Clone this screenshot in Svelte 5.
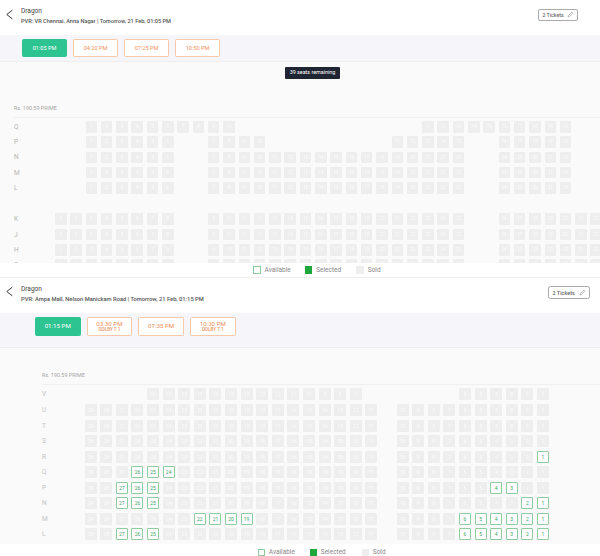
<script>
	const wide = [[0, 29, 19], [20, 10, 10]];

	function makeRows(labels, segs, picked = {}) {
		return labels.map((label) => ({ label, segs, picked: picked[label] || [] }));
	}

	function seatsOf(row, dir) {
		const out = [];
		for (const [col, start, count] of row.segs) {
			for (let i = 0; i < count; i++) {
				const num = start + i * dir;
				out.push({ col: col + i + 1, num, open: row.picked.includes(num) });
			}
		}
		return out;
	}

	const panels = [
		{
			id: 'first',
			place: 'PVR: VR Chennai, Anna Nagar | Tomorrow, 21 Feb, 01:05 PM',
			times: [['01:05 PM'], ['04:20 PM'], ['07:25 PM'], ['10:50 PM']],
			remaining: '39 seats remaining',
			dir: 1,
			rows: [
				...makeRows(['Q'], [[2, 1, 10], [24, 11, 10]]),
				...makeRows(['P'], [[2, 1, 6], [10, 7, 4], [22, 11, 5], [29, 16, 5]]),
				...makeRows(['N', 'M', 'L'], [[2, 1, 6], [10, 7, 17], [29, 24, 5]])
			],
			rowsBelow: makeRows(['K', 'J', 'H', 'G'], [[0, 1, 8], [10, 9, 17], [29, 26, 7]])
		},
		{
			id: 'second',
			place: 'PVR: Ampa Mall, Nelson Manickam Road | Tomorrow, 21 Feb, 01:15 PM',
			times: [['01:15 PM'], ['03:30 PM', 'DOLBY 7.1'], ['07:35 PM'], ['10:30 PM', 'DOLBY 7.1']],
			dir: -1,
			rows: [
				...makeRows(['V'], [[4, 20, 14], [24, 6, 6]]),
				...makeRows(['U', 'T', 'S', 'R', 'Q', 'P', 'N', 'M', 'L'], wide, {
					R: [1],
					Q: [26, 25, 24],
					P: [27, 26, 25, 4, 3],
					N: [27, 26, 25, 2, 1],
					M: [22, 21, 20, 19, 6, 5, 4, 3, 2, 1],
					L: [27, 26, 25, 6, 5, 4, 3, 2, 1]
				})
			],
			rowsBelow: []
		}
	];
</script>

{#snippet seatRow(row, dir)}
	<div class="row">
		<span class="row-label">{row.label}</span>
		<div class="seats">
			{#each seatsOf(row, dir) as seat}
				<span class="seat" class:open={seat.open} style="grid-column: {seat.col}">{seat.num}</span>
			{/each}
		</div>
	</div>
{/snippet}

<main>
	{#each panels as panel}
		<section class="panel {panel.id}">
			<header>
				<svg class="back" viewBox="0 0 8 12" aria-hidden="true">
					<polyline points="7.2,1 0.9,6 7.2,11" fill="none" stroke="#333" stroke-width="1.1" />
				</svg>
				<div class="titles">
					<h1>Dragon</h1>
					<p>{panel.place}</p>
				</div>
				<button class="tickets">
					2 Tickets
					<svg viewBox="0 0 10 10" aria-hidden="true">
						<path d="M1.5 8.5 L2 6.6 L7 1.6 L8.4 3 L3.4 8 Z" fill="none" stroke="#888" stroke-width="0.8" />
					</svg>
				</button>
			</header>

			<nav class="shows">
				{#each panel.times as time, i}
					<button class="show" class:active={i === 0}>
						{time[0]}
						{#if time[1]}<small>{time[1]}</small>{/if}
					</button>
				{/each}
			</nav>

			<div class="map">
				{#if panel.remaining}
					<div class="remaining">{panel.remaining}</div>
				{/if}
				<div class="price">Rs. 190.59 PRIME</div>
				{#each panel.rows as row}
					{@render seatRow(row, panel.dir)}
				{/each}
				{#if panel.rowsBelow.length}
					<div class="aisle"></div>
					{#each panel.rowsBelow as row}
						{@render seatRow(row, panel.dir)}
					{/each}
				{/if}
			</div>

			<footer>
				<span class="key"><i class="swatch available"></i>Available</span>
				<span class="key"><i class="swatch selected"></i>Selected</span>
				<span class="key"><i class="swatch sold"></i>Sold</span>
			</footer>
		</section>
	{/each}
</main>

<style>
	:global(body) {
		margin: 0;
		background: #fff;
	}

	main {
		width: 600px;
		height: 556px;
		overflow: hidden;
		font-family: Roboto, "Liberation Sans", sans-serif;
		color: #555;
	}

	.panel {
		--seat: 11.5px;
		--gap: 3.8px;
		--inset: 14px;
		--label: 41px;
	}

	.panel.first {
		border-bottom: 1px solid #eee;
	}

	.panel.second {
		--seat: 12px;
		--gap: 3.6px;
		--inset: 42px;
		--label: 42.7px;
	}

	header {
		display: flex;
		align-items: flex-start;
		height: 35px;
		box-sizing: border-box;
		padding: 6.5px 22px 0 6px;
	}

	.second header {
		padding: 6.5px 10px 0 6px;
	}

	.back {
		width: 7px;
		height: 11px;
		margin: 2px 8px 0 0;
		flex: none;
	}

	.second .back {
		margin-top: 1.5px;
	}

	.titles {
		flex: 1;
	}

	h1 {
		margin: 0;
		font-size: 6.5px;
		line-height: 8px;
		font-weight: 400;
		color: #444;
	}

	p {
		margin: 3px 0 0;
		font-size: 5.6px;
		line-height: 7.5px;
		font-weight: 500;
		color: #555;
	}

	.second p {
		font-size: 5.75px;
	}

	.tickets {
		display: flex;
		align-items: center;
		justify-content: space-between;
		width: 40px;
		height: 12px;
		margin-top: 2px;
		padding: 0 3.5px;
		background: #fff;
		border: 1px solid #aaa;
		border-radius: 2px;
		font: 500 5.2px Roboto, sans-serif;
		color: #666;
	}

	.second .tickets {
		width: 42px;
		height: 13px;
		margin-top: 1.5px;
		border-radius: 2.5px;
		font-size: 5.5px;
	}

	.tickets svg {
		width: 7px;
		height: 7px;
	}

	.shows {
		display: flex;
		gap: 6px;
		align-items: center;
		height: 26px;
		padding-left: 22px;
		background: #f5f5fa;
		border-bottom: 1px solid #eee;
	}

	.second .shows {
		gap: 6.2px;
		height: 26.6px;
		padding: 0 0 7.4px 35px;
	}

	.show {
		display: flex;
		flex-direction: column;
		align-items: center;
		justify-content: center;
		width: 45px;
		height: 18px;
		padding: 0;
		background: #fff;
		border: 1px solid #f8c8a8;
		border-radius: 1.5px;
		font: 400 5.6px/6.5px Roboto, sans-serif;
		color: #f0905a;
	}

	.second .show {
		width: 45.5px;
		height: 19px;
		font-size: 6.2px;
	}

	.show.active {
		background: #2dc492;
		border-color: #2dc492;
		color: #fff;
	}

	small {
		font-size: 4.6px;
		font-weight: 500;
		line-height: 5px;
	}

	.map {
		position: relative;
		height: 201px;
		box-sizing: border-box;
		overflow: hidden;
		padding: 38px 0 0 var(--inset);
		background: #fafafa;
	}

	.second .map {
		height: 196.5px;
		padding-top: 24px;
	}

	.remaining {
		position: absolute;
		top: 5px;
		left: 285px;
		width: 55px;
		height: 11.5px;
		background: #1f2533;
		border-radius: 1px;
		font-size: 5.4px;
		line-height: 11.5px;
		text-align: center;
		color: #fff;
	}

	.price {
		height: 16.5px;
		margin-bottom: 3.5px;
		border-bottom: 1px solid #f0f0f0;
		font-size: 5.4px;
		line-height: 16px;
		color: #a6a6a6;
	}

	.second .price {
		height: 12px;
		margin-bottom: 3.5px;
		line-height: 6px;
	}

	.row {
		display: flex;
		align-items: center;
		height: var(--seat);
		margin-bottom: var(--gap);
	}

	.second .row {
		margin-bottom: 3.55px;
	}

	.row-label {
		flex: none;
		width: var(--label);
		font-size: 6.5px;
		color: #b5b5b5;
	}

	.second .row-label {
		color: #c4c4c4;
	}

	.seats {
		display: grid;
		grid-template-columns: repeat(36, var(--seat));
		column-gap: var(--gap);
	}

	.seat {
		grid-row: 1;
		height: var(--seat);
		background: #eee;
		border-radius: 1px;
		font-size: 4.6px;
		line-height: var(--seat);
		text-align: center;
		color: #fbfbfb;
	}

	.second .seat {
		font-size: 5px;
	}

	.seat.open {
		box-sizing: border-box;
		background: #fff;
		border: 1px solid #8ecb9f;
		line-height: 10px;
		color: #3f9e5f;
	}

	.aisle {
		height: 16px;
	}

	footer {
		display: flex;
		align-items: center;
		height: 14px;
		padding-left: 253.3px;
		background: #fff;
	}

	.second footer {
		box-sizing: border-box;
		height: 12px;
		padding: 4px 0 0 257.5px;
	}

	.key {
		display: flex;
		align-items: center;
		gap: 3.8px;
		width: 51.6px;
		flex: none;
		font-size: 6.5px;
		color: #888;
	}

	.second .key {
		width: 52px;
	}

	.swatch {
		width: 7.5px;
		height: 7.5px;
		box-sizing: border-box;
		flex: none;
	}

	.swatch.available {
		border: 1px solid #8ecb9f;
	}

	.swatch.selected {
		background: #1ea83c;
	}

	.swatch.sold {
		background: #eee;
	}
</style>
